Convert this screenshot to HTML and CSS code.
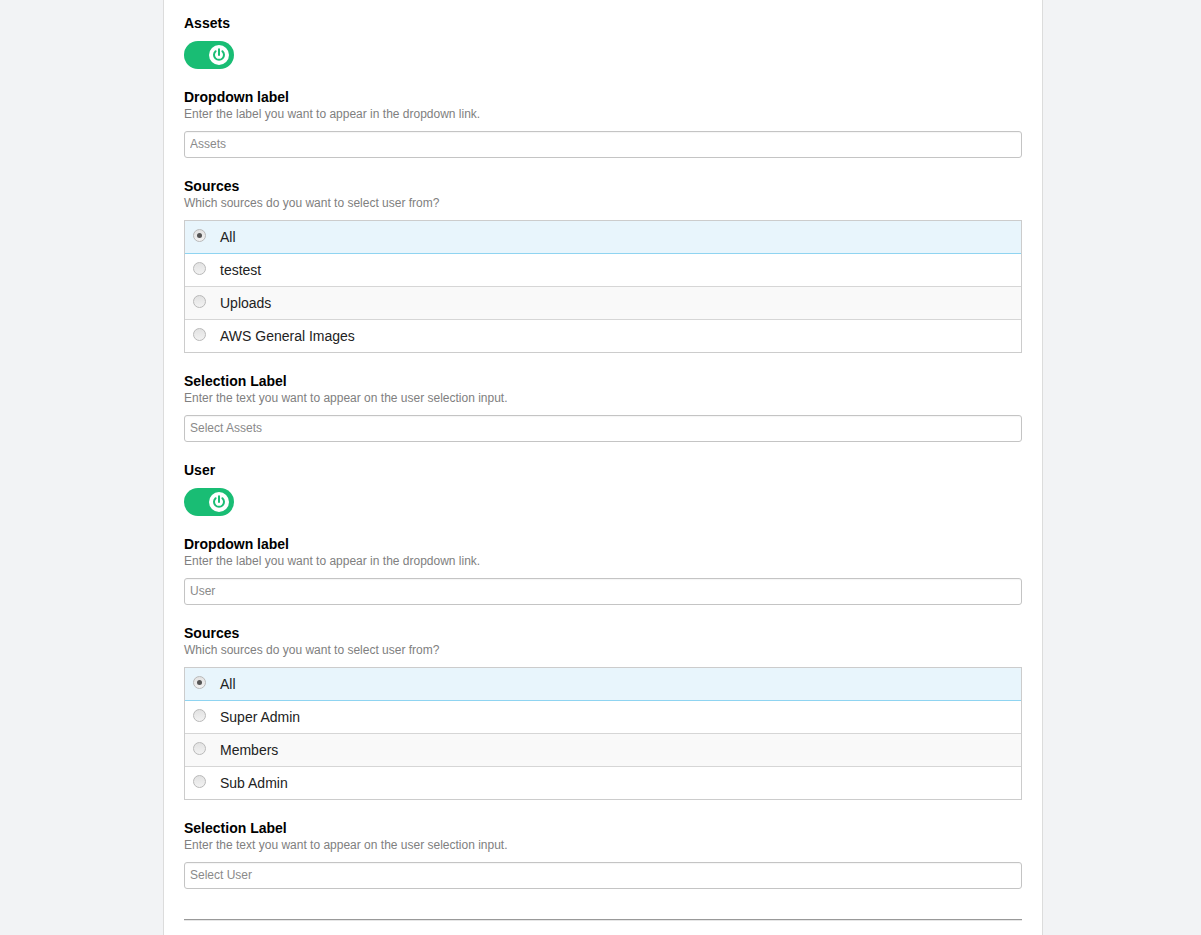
FILE: index.html
```html
<!DOCTYPE html>
<html>
<head>
<meta charset="utf-8">
<link rel="stylesheet" href="styles.css">
</head>
<body>
<div class="panel">
  <section class="group">
    <h3 class="title">Assets</h3>
    <div class="toggle"><span class="knob"><svg viewBox="0 0 20 20" width="20" height="20"><path d="M6.6 6.2 A5 5 0 1 0 13.4 6.2" fill="none" stroke="#19bd74" stroke-width="2" stroke-linecap="round"/><line x1="10" y1="4.2" x2="10" y2="10" stroke="#19bd74" stroke-width="2" stroke-linecap="round"/></svg></span></div>
  </section>
  <section class="group">
    <h3 class="title">Dropdown label</h3>
    <p class="desc">Enter the label you want to appear in the dropdown link.</p>
    <input class="field" type="text" placeholder="Assets">
  </section>
  <section class="group">
    <h3 class="title">Sources</h3>
    <p class="desc">Which sources do you want to select user from?</p>
    <ul class="options">
      <li class="opt active"><span class="radio on"></span>All</li>
      <li class="opt"><span class="radio"></span>testest</li>
      <li class="opt alt"><span class="radio"></span>Uploads</li>
      <li class="opt"><span class="radio"></span>AWS General Images</li>
    </ul>
  </section>
  <section class="group">
    <h3 class="title">Selection Label</h3>
    <p class="desc">Enter the text you want to appear on the user selection input.</p>
    <input class="field" type="text" placeholder="Select Assets">
  </section>
  <section class="group">
    <h3 class="title">User</h3>
    <div class="toggle"><span class="knob"><svg viewBox="0 0 20 20" width="20" height="20"><path d="M6.6 6.2 A5 5 0 1 0 13.4 6.2" fill="none" stroke="#19bd74" stroke-width="2" stroke-linecap="round"/><line x1="10" y1="4.2" x2="10" y2="10" stroke="#19bd74" stroke-width="2" stroke-linecap="round"/></svg></span></div>
  </section>
  <section class="group">
    <h3 class="title">Dropdown label</h3>
    <p class="desc">Enter the label you want to appear in the dropdown link.</p>
    <input class="field" type="text" placeholder="User">
  </section>
  <section class="group">
    <h3 class="title">Sources</h3>
    <p class="desc">Which sources do you want to select user from?</p>
    <ul class="options">
      <li class="opt active"><span class="radio on"></span>All</li>
      <li class="opt"><span class="radio"></span>Super Admin</li>
      <li class="opt alt"><span class="radio"></span>Members</li>
      <li class="opt"><span class="radio"></span>Sub Admin</li>
    </ul>
  </section>
  <section class="group">
    <h3 class="title">Selection Label</h3>
    <p class="desc">Enter the text you want to appear on the user selection input.</p>
    <input class="field" type="text" placeholder="Select User">
  </section>
  <hr class="rule">
</div>
</body>
</html>
```
FILE: styles.css
```css
html, body {
  margin: 0;
  padding: 0;
  background: #f2f3f5;
  font-family: "Liberation Sans", Arial, sans-serif;
}
.panel {
  box-sizing: border-box;
  width: 880px;
  min-height: 935px;
  margin-left: 163px;
  background: #fff;
  border-left: 1px solid #dcdcdc;
  border-right: 1px solid #dcdcdc;
  padding: 13px 20px 0 20px;
}
.group {
  margin-bottom: 18px;
}
.title {
  margin: 0;
  padding-top: 1px;
  font-size: 14px;
  line-height: 18px;
  font-weight: bold;
  color: #000;
}
.desc {
  margin: 0 0 9px 0;
  font-size: 12px;
  line-height: 16px;
  color: #808080;
}
.toggle {
  margin-top: 9px;
  width: 50px;
  height: 28px;
  border-radius: 14px;
  background: #19bd74;
  display: flex;
  align-items: center;
  justify-content: flex-end;
  padding-right: 5px;
  box-sizing: border-box;
}
.knob {
  width: 20px;
  height: 20px;
  border-radius: 50%;
  background: #fff;
  display: flex;
}
.field {
  display: block;
  box-sizing: border-box;
  width: 100%;
  height: 27px;
  margin: 0;
  border: 1px solid #c4c4c4;
  border-radius: 3px;
  padding: 0 5px 2px 5px;
  font-family: "Liberation Sans", Arial, sans-serif;
  font-size: 12px;
  color: #333;
  background: #fff;
  box-shadow: inset 0 1px 1px rgba(0,0,0,0.04);
}
.field::placeholder {
  color: #8a8a8a;
}
.options {
  list-style: none;
  margin: 0;
  padding: 0;
  border: 1px solid #cccccc;
}
.opt {
  display: flex;
  align-items: center;
  height: 32px;
  padding-left: 8px;
  font-size: 14px;
  color: #222;
  background: #fff;
  border-top: 1px solid #d6d6d6;
}
.opt:first-child {
  border-top: none;
}
.opt.alt {
  background: #f9f9f9;
}
.opt.active {
  background: #e8f5fc;
  border-bottom: 1px solid #8fd4f1;
}
.opt.active + .opt {
  border-top: none;
}
.radio {
  box-sizing: border-box;
  width: 13px;
  height: 13px;
  border-radius: 50%;
  border: 1px solid #b9b9b9;
  background: linear-gradient(#e2e2e2, #f2f2f2);
  margin-right: 14px;
  margin-top: -3px;
  display: flex;
  align-items: center;
  justify-content: center;
}
.radio.on::after {
  content: "";
  width: 5px;
  height: 5px;
  border-radius: 50%;
  background: #555;
}
.rule {
  margin: 30px 0 0 0;
  border: none;
  border-top: 1px solid #999;
  border-bottom: 1px solid #e6e6e6;
  height: 0;
}
```
